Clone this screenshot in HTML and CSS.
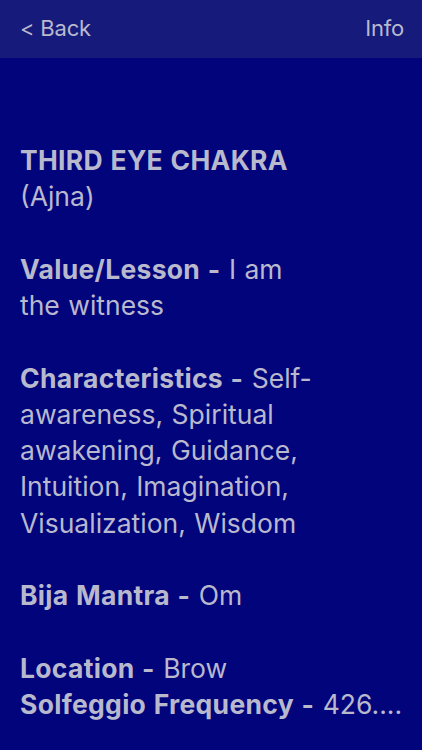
FILE: index.html
```html
<!DOCTYPE html>
<html>
<head>
<meta charset="utf-8">
<link rel="stylesheet" href="styles.css">
</head>
<body>
<header class="bar">
  <span class="nav">&lt; Back</span>
  <span class="nav">Info</span>
</header>
<main class="content">
  <p class="line"><b>THIRD EYE CHAKRA</b><br>(Ajna)</p>
  <p class="line"><b>Value/Lesson -</b> I am<br>the witness</p>
  <p class="line"><b>Characteristics -</b> Self-<br>awareness, Spiritual<br>awakening, Guidance,<br>Intuition, Imagination,<br>Visualization, Wisdom</p>
  <p class="line"><b>Bija Mantra -</b> Om</p>
  <p class="line tight"><b>Location -</b> Brow</p>
  <p class="line trunc"><b>Solfeggio Frequency -</b> 426....</p>
</main>
</body>
</html>
```
FILE: styles.css
```css
html, body {
  margin: 0;
  padding: 0;
  background: #02047c;
  height: 100%;
  overflow: hidden;
}
body {
  font-family: Inter, "Noto Sans", sans-serif;
  color: #b9b9cd;
}
.bar {
  height: 58px;
  background: #161b7b;
  display: flex;
  justify-content: space-between;
  align-items: center;
  padding: 0 18px 2px 20px;
  box-sizing: border-box;
}
.nav {
  font-size: 22px;
  font-weight: 400;
  letter-spacing: -0.2px;
}
.content {
  padding: 84px 20px 0 20px;
}
.line {
  margin: 0 0 36.25px 0;
  font-size: 26.5px;
  line-height: 36.25px;
  letter-spacing: 0;
  word-spacing: 1px;
  white-space: nowrap;
}
.line b {
  font-weight: 700;
  letter-spacing: 0.3px;
}
.tight {
  margin-bottom: 0;
}
.trunc {
  overflow: hidden;
}
```
